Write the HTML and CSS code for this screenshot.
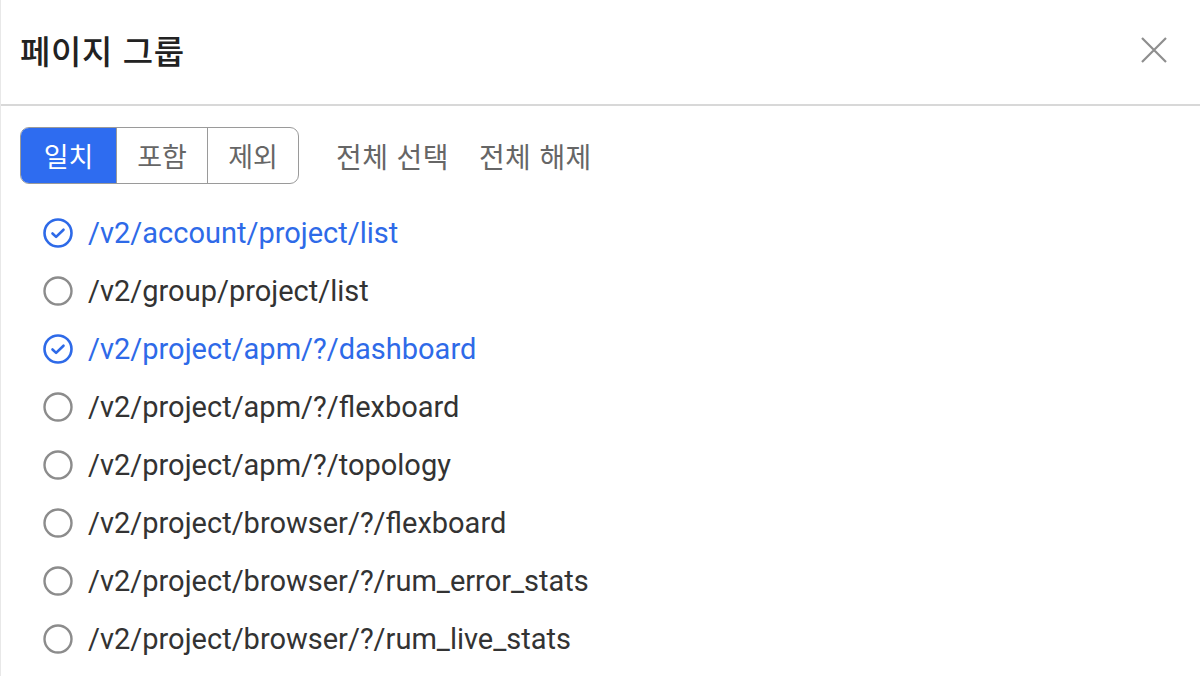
FILE: index.html
```html
<!DOCTYPE html>
<html lang="ko">
<head>
<meta charset="utf-8">
<link rel="stylesheet" href="styles.css">
</head>
<body>
<div class="modal">
  <header class="head">
    <h1 class="title">페이지 그룹</h1>
    <button class="close" aria-label="닫기">
      <svg width="28" height="28" viewBox="0 0 28 28"><path d="M2 2L26 26M26 2L2 26" stroke="#8e8e8e" stroke-width="2.2" fill="none"/></svg>
    </button>
  </header>
  <div class="body">
    <div class="toolbar">
      <div class="seg">
        <span class="seg-item active">일치</span>
        <span class="seg-item">포함</span>
        <span class="seg-item">제외</span>
      </div>
      <span class="link">전체 선택</span>
      <span class="link">전체 해제</span>
    </div>
    <ul class="list">
      <li class="item checked"><svg class="ico" viewBox="0 0 32 32"><circle cx="16" cy="16" r="13.5" fill="none" stroke="currentColor" stroke-width="2.6"/><path d="M10.5 16.5l3.6 3.4 7.4-7.2" fill="none" stroke="currentColor" stroke-width="2.6" stroke-linecap="round" stroke-linejoin="round"/></svg><span>/v2/account/project/list</span></li>
      <li class="item"><svg class="ico" viewBox="0 0 32 32"><circle cx="16" cy="16" r="13.5" fill="none" stroke="currentColor" stroke-width="2.4"/></svg><span>/v2/group/project/list</span></li>
      <li class="item checked"><svg class="ico" viewBox="0 0 32 32"><circle cx="16" cy="16" r="13.5" fill="none" stroke="currentColor" stroke-width="2.6"/><path d="M10.5 16.5l3.6 3.4 7.4-7.2" fill="none" stroke="currentColor" stroke-width="2.6" stroke-linecap="round" stroke-linejoin="round"/></svg><span>/v2/project/apm/?/dashboard</span></li>
      <li class="item"><svg class="ico" viewBox="0 0 32 32"><circle cx="16" cy="16" r="13.5" fill="none" stroke="currentColor" stroke-width="2.4"/></svg><span>/v2/project/apm/?/flexboard</span></li>
      <li class="item"><svg class="ico" viewBox="0 0 32 32"><circle cx="16" cy="16" r="13.5" fill="none" stroke="currentColor" stroke-width="2.4"/></svg><span>/v2/project/apm/?/topology</span></li>
      <li class="item"><svg class="ico" viewBox="0 0 32 32"><circle cx="16" cy="16" r="13.5" fill="none" stroke="currentColor" stroke-width="2.4"/></svg><span>/v2/project/browser/?/flexboard</span></li>
      <li class="item"><svg class="ico" viewBox="0 0 32 32"><circle cx="16" cy="16" r="13.5" fill="none" stroke="currentColor" stroke-width="2.4"/></svg><span>/v2/project/browser/?/rum_error_stats</span></li>
      <li class="item"><svg class="ico" viewBox="0 0 32 32"><circle cx="16" cy="16" r="13.5" fill="none" stroke="currentColor" stroke-width="2.4"/></svg><span>/v2/project/browser/?/rum_live_stats</span></li>
    </ul>
  </div>
</div>
</body>
</html>
```
FILE: styles.css
```css
* { box-sizing: border-box; }
html, body { margin: 0; padding: 0; background: #fff; }
body {
  font-family: Roboto, "Noto Sans CJK KR", sans-serif;
  width: 1200px;
  height: 676px;
  overflow: hidden;
}
.modal {
  height: 676px;
  border-left: 1px solid #e8e8e8;
}
.head {
  height: 106px;
  display: flex;
  align-items: center;
  justify-content: space-between;
  padding: 0 32px 4px 19px;
  border-bottom: 2px solid #d8d8d8;
}
.title {
  margin: 0;
  font-family: "Noto Sans CJK KR", sans-serif;
  font-size: 33px;
  font-weight: 500;
  color: #222;
  letter-spacing: 0.6px;
}
.close {
  border: 0;
  background: none;
  padding: 0;
  width: 28px;
  height: 28px;
  display: flex;
}
.body {
  padding: 21px 0 0 19px;
}
.toolbar {
  display: flex;
  align-items: center;
  height: 57px;
}
.seg {
  display: flex;
  height: 57px;
  border: 1.5px solid #9a9a9a;
  border-radius: 9px;
  overflow: hidden;
  margin-right: 37px;
}
.seg-item {
  display: flex;
  align-items: center;
  justify-content: center;
  font-family: "Noto Sans CJK KR", sans-serif;
  font-size: 27px;
  color: #666;
  width: 91px;
  border-left: 1.5px solid #9a9a9a;
}
.seg-item:first-child { border-left: 0; width: 95px; }
.seg-item.active {
  background: #2e6cf0;
  color: #fff;
}
.link {
  font-family: "Noto Sans CJK KR", sans-serif;
  font-size: 28px;
  color: #666;
  margin-right: 30px;
  letter-spacing: 0.4px;
}
.list {
  list-style: none;
  margin: 20px 0 0;
  padding: 0;
}
.item {
  display: flex;
  align-items: center;
  height: 58px;
  font-size: 29px;
  color: #333;
  padding-left: 22px;
}
.ico {
  width: 32px;
  height: 32px;
  color: #8c8c8c;
  margin-right: 14px;
  flex: none;
}
.item.checked { color: #2e6ae8; }
.item.checked .ico { color: #2e6ae8; }
```
